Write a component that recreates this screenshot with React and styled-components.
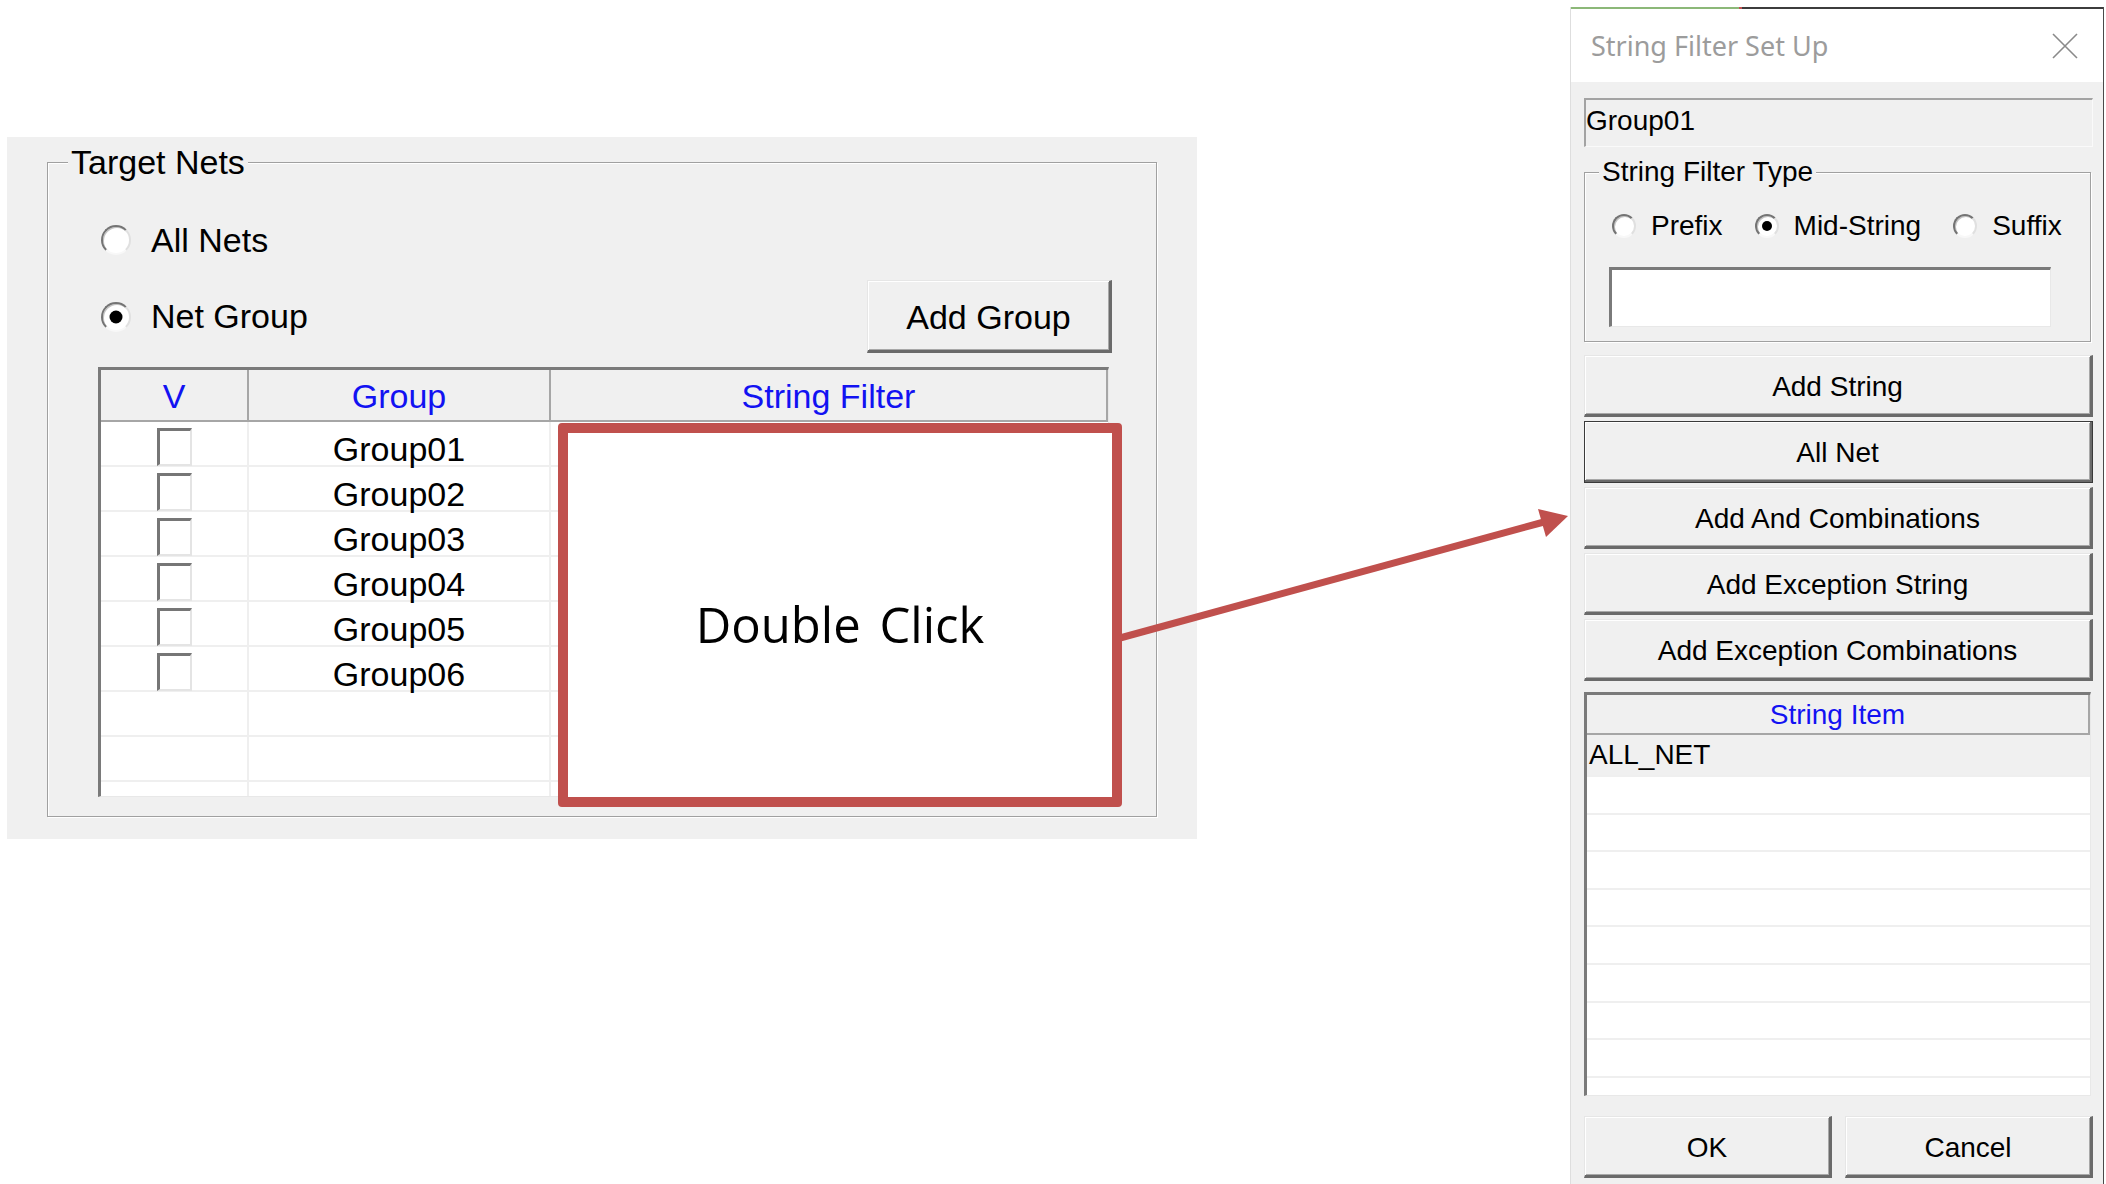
import React from 'react';
import styled, { createGlobalStyle } from 'styled-components';

const ANNOT = '#c0504d';
const HEAD_BLUE = '#1212f2';

const GlobalStyle = createGlobalStyle`
  html, body {
    margin: 0;
    padding: 0;
    background: #fff;
  }
  body {
    font-family: "Liberation Sans", Arial, sans-serif;
    color: #000;
  }
  * {
    box-sizing: border-box;
  }
`;

const Page = styled.div`
  position: relative;
  width: 2106px;
  height: 1184px;
  overflow: hidden;
  display: flex;
  justify-content: space-between;
  align-items: flex-start;
`;

/* ---------- left: Target Nets panel ---------- */

const LeftPanel = styled.div`
  position: relative;
  margin: 137px 0 0 7px;
  width: 1190px;
  height: 702px;
  padding: 5px 0 0 40px;
  background: #f0f0f0;
`;

const GroupBox = styled.fieldset`
  margin: ${p => p.$mt || 0}px 0 0 0;
  padding: 0;
  min-width: 0;
  width: ${p => p.$w}px;
  height: ${p => p.$h}px;
  border: 1px solid #a0a0a0;
  box-shadow: 1px 1px 0 #fff, inset 1px 1px 0 #fff;
`;

const Legend = styled.legend`
  margin-left: ${p => p.$offset}px;
  padding: 0 3px;
  font-size: ${p => p.$size}px;
  line-height: ${p => p.$lh}px;
  background: #f0f0f0;
`;

const GroupContent = styled.div`
  display: flex;
  flex-direction: column;
  align-items: flex-start;
  padding: ${p => p.$pt}px 0 0 ${p => p.$pl}px;
`;

const RadioLabel = styled.label`
  display: flex;
  align-items: center;
  gap: ${p => p.$gap}px;
  height: ${p => p.$h}px;
  margin: ${p => p.$mt || 0}px 0 0 ${p => p.$ml || 0}px;
  font-size: ${p => p.$size}px;
  white-space: nowrap;
`;

const RadioDot = styled.span`
  position: relative;
  flex: none;
  width: ${p => p.$d}px;
  height: ${p => p.$d}px;
  border-radius: 50%;
  background: #fff;
  border: 2px solid;
  border-color: #747474 #e0e0e0 #f8f8f8 #747474;
  box-shadow: inset 1px 1px 0 #c4c4c4;

  &::after {
    content: '';
    display: ${p => (p.$on ? 'block' : 'none')};
    position: absolute;
    left: 50%;
    top: 50%;
    width: ${p => Math.round(p.$d * 0.42)}px;
    height: ${p => Math.round(p.$d * 0.42)}px;
    transform: translate(-50%, -50%);
    border-radius: 50%;
    background: #000;
  }
`;

const Radio = ({ d, on, size, gap, h, ml, mt, children }) => (
  <RadioLabel $size={size} $gap={gap} $h={h} $ml={ml} $mt={mt}>
    <RadioDot $d={d} $on={on} />
    {children}
  </RadioLabel>
);

const GroupRow = styled.div`
  display: flex;
  align-items: center;
  justify-content: space-between;
  width: 1014px;
  margin-top: 17px;
`;

const WinButton = styled.button`
  display: flex;
  align-items: center;
  justify-content: center;
  width: ${p => (p.$w ? `${p.$w}px` : '100%')};
  height: ${p => p.$h}px;
  padding: 3px 0 0 0;
  font-family: "Liberation Sans", Arial, sans-serif;
  font-size: ${p => p.$size}px;
  color: #000;
  background: #f0f0f0;
  border-style: solid;
  border-width: 1px 3px 3px 1px;
  border-color: #e6e6e6 #6a6a6a #6a6a6a #e6e6e6;
  box-shadow: inset 1px 1px 0 #fff, inset -1px -1px 0 #a8a8a8;
  outline: ${p => (p.$default ? '1px solid #3a3a3a' : 'none')};
  outline-offset: -1px;
`;

const Table = styled.div`
  width: 1011px;
  height: 430px;
  margin-top: 14px;
  overflow: hidden;
  background: #fff;
  border-style: solid;
  border-width: 3px 1px 1px 3px;
  border-color: #7a7a7a #e8e8e8 #e8e8e8 #7a7a7a;
`;

const COLS = '148px 302px 1fr';

const HeaderRow = styled.div`
  display: grid;
  grid-template-columns: ${COLS};
  height: 52px;
  background: #f0f0f0;
  border-bottom: 2px solid #a6a6a6;
`;

const HeaderCell = styled.div`
  display: flex;
  align-items: center;
  justify-content: center;
  padding-top: 2px;
  font-size: 34px;
  color: ${HEAD_BLUE};
  border-right: 2px solid #a6a6a6;
`;

const BodyRow = styled.div`
  display: grid;
  grid-template-columns: ${COLS};
  height: 45px;
  border-bottom: 2px solid #efefef;
`;

const BodyCell = styled.div`
  display: flex;
  align-items: center;
  justify-content: center;
  padding-top: ${p => p.$shift || 0}px;
  font-size: 34px;
  border-right: ${p => (p.$last ? 'none' : '2px solid #efefef')};
`;

const CheckBox = styled.span`
  width: 35px;
  height: 38px;
  background: #fff;
  border-style: solid;
  border-width: 3px 2px 2px 3px;
  border-color: #767676 #e4e4e4 #e4e4e4 #767676;
`;

const RedBox = styled.div`
  position: absolute;
  left: 551px;
  top: 286px;
  width: 564px;
  height: 384px;
  display: flex;
  align-items: center;
  justify-content: center;
  padding-top: 18px;
  background: #fff;
  border: 10px solid ${ANNOT};
  border-radius: 4px;
  font-family: "Open Sans", "Noto Sans", sans-serif;
  font-size: 49px;
  word-spacing: 6px;
`;

const ArrowLayer = styled.svg`
  position: absolute;
  left: 0;
  top: 0;
  pointer-events: none;
`;

/* ---------- right: String Filter Set Up dialog ---------- */

const Dialog = styled.div`
  display: flex;
  flex-direction: column;
  width: 534px;
  height: 1177px;
  margin: 7px 2px 0 0;
  border-left: 1px solid #dedede;
  border-right: 1px solid #4a4a4a;
`;

const TopEdge = styled.div`
  height: 2px;
  background: linear-gradient(to right, #8cb878 0 168px, #c05050 168px 171px, #3c3c3c 171px);
`;

const TitleBar = styled.div`
  display: flex;
  align-items: center;
  justify-content: space-between;
  height: 73px;
  padding: 0 25px 0 20px;
  background: #fff;
`;

const Title = styled.span`
  font-family: "Noto Sans", "Open Sans", sans-serif;
  font-size: 27px;
  color: #9c9c9c;
`;

const DialogBody = styled.div`
  flex: 1;
  display: flex;
  flex-direction: column;
  padding: 16px 10px 0 13px;
  background: #f0f0f0;
`;

const NameField = styled.div`
  display: flex;
  align-items: center;
  height: 49px;
  padding-bottom: 4px;
  font-size: 28px;
  background: #f0f0f0;
  border-style: solid;
  border-width: 2px 1px 1px 2px;
  border-color: #a3a3a3 #fafafa #fafafa #a3a3a3;
`;

const TextInput = styled.div`
  width: 442px;
  height: 60px;
  margin: 23px 0 0 0;
  background: #fff;
  border-style: solid;
  border-width: 3px 1px 1px 3px;
  border-color: #7a7a7a #e8e8e8 #e8e8e8 #7a7a7a;
`;

const TypeRow = styled.div`
  display: flex;
  align-items: center;
  gap: 32px;
  margin: 20px 0 0 3px;
`;

const ButtonStack = styled.div`
  display: flex;
  flex-direction: column;
  gap: 4px;
  margin-top: 13px;
`;

const ItemList = styled.div`
  height: 404px;
  width: 507px;
  margin-top: 11px;
  overflow: hidden;
  background: #fff;
  border-style: solid;
  border-width: 3px 1px 1px 3px;
  border-color: #7a7a7a #e8e8e8 #e8e8e8 #7a7a7a;
`;

const ListHeader = styled.div`
  display: flex;
  align-items: center;
  justify-content: center;
  height: 40px;
  padding-top: 2px;
  font-size: 28px;
  color: ${HEAD_BLUE};
  background: #f0f0f0;
  border-bottom: 2px solid #a6a6a6;
  border-right: 2px solid #a6a6a6;
`;

const ListRow = styled.div`
  display: flex;
  align-items: center;
  height: ${p => (p.$selected ? 42 : 37.6)}px;
  padding-left: 2px;
  font-size: 28px;
  background: ${p => (p.$selected ? '#f0f0f0' : '#fff')};
  border-bottom: 2px solid #efefef;
`;

const Footer = styled.div`
  display: flex;
  justify-content: space-between;
  margin-top: 20px;
`;

const CloseIcon = () => (
  <svg width="26" height="26" viewBox="0 0 26 26">
    <path d="M1 1 L25 25 M25 1 L1 25" stroke="#8a8a8a" strokeWidth="1.6" fill="none" />
  </svg>
);

const groups = ['Group01', 'Group02', 'Group03', 'Group04', 'Group05', 'Group06', '', '', ''];

const actions = [
  { label: 'Add String' },
  { label: 'All Net', isDefault: true },
  { label: 'Add And Combinations' },
  { label: 'Add Exception String' },
  { label: 'Add Exception Combinations' },
];

const App = () => (
  <Page>
    <GlobalStyle />

    <LeftPanel>
      <GroupBox $w={1110} $h={675}>
        <Legend $offset={20} $size={34} $lh={40}>Target Nets</Legend>
        <GroupContent $pl={50} $pt={35}>
          <Radio d={30} size={34} gap={20} h={46} ml={3}>All Nets</Radio>
          <GroupRow>
            <Radio d={30} size={34} gap={20} h={46} ml={3} on>Net Group</Radio>
            <WinButton $w={245} $h={73} $size={34}>Add Group</WinButton>
          </GroupRow>
          <Table>
            <HeaderRow>
              <HeaderCell>V</HeaderCell>
              <HeaderCell>Group</HeaderCell>
              <HeaderCell>String Filter</HeaderCell>
            </HeaderRow>
            {groups.map((g, i) => (
              <BodyRow key={i}>
                <BodyCell $shift={2}>{g && <CheckBox />}</BodyCell>
                <BodyCell $shift={8}>{g}</BodyCell>
                <BodyCell $last />
              </BodyRow>
            ))}
          </Table>
        </GroupContent>
      </GroupBox>

      <RedBox>Double Click</RedBox>
    </LeftPanel>

    <Dialog>
      <TopEdge />
      <TitleBar>
        <Title>String Filter Set Up</Title>
        <CloseIcon />
      </TitleBar>
      <DialogBody>
        <NameField>Group01</NameField>

        <GroupBox $w={507} $h={186} $mt={9}>
          <Legend $offset={14} $size={28} $lh={32}>String Filter Type</Legend>
          <GroupContent $pl={24} $pt={0}>
            <TypeRow>
              <Radio d={24} size={28} gap={15} h={36}>Prefix</Radio>
              <Radio d={24} size={28} gap={15} h={36} on>Mid-String</Radio>
              <Radio d={24} size={28} gap={15} h={36}>Suffix</Radio>
            </TypeRow>
            <TextInput />
          </GroupContent>
        </GroupBox>

        <ButtonStack>
          {actions.map(a => (
            <WinButton key={a.label} $h={62} $size={28} $default={a.isDefault}>
              {a.label}
            </WinButton>
          ))}
        </ButtonStack>

        <ItemList>
          <ListHeader>String Item</ListHeader>
          <ListRow $selected>ALL_NET</ListRow>
          {Array.from({ length: 9 }).map((_, i) => (
            <ListRow key={i} />
          ))}
        </ItemList>

        <Footer>
          <WinButton $w={248} $h={62} $size={28}>OK</WinButton>
          <WinButton $w={248} $h={62} $size={28}>Cancel</WinButton>
        </Footer>
      </DialogBody>
    </Dialog>

    <ArrowLayer width="2106" height="1184" viewBox="0 0 2106 1184">
      <line x1="1120" y1="638" x2="1544" y2="522" stroke={ANNOT} strokeWidth="7" />
      <polygon points="1568,516 1538,509 1546,537" fill={ANNOT} />
    </ArrowLayer>
  </Page>
);

export default App;
